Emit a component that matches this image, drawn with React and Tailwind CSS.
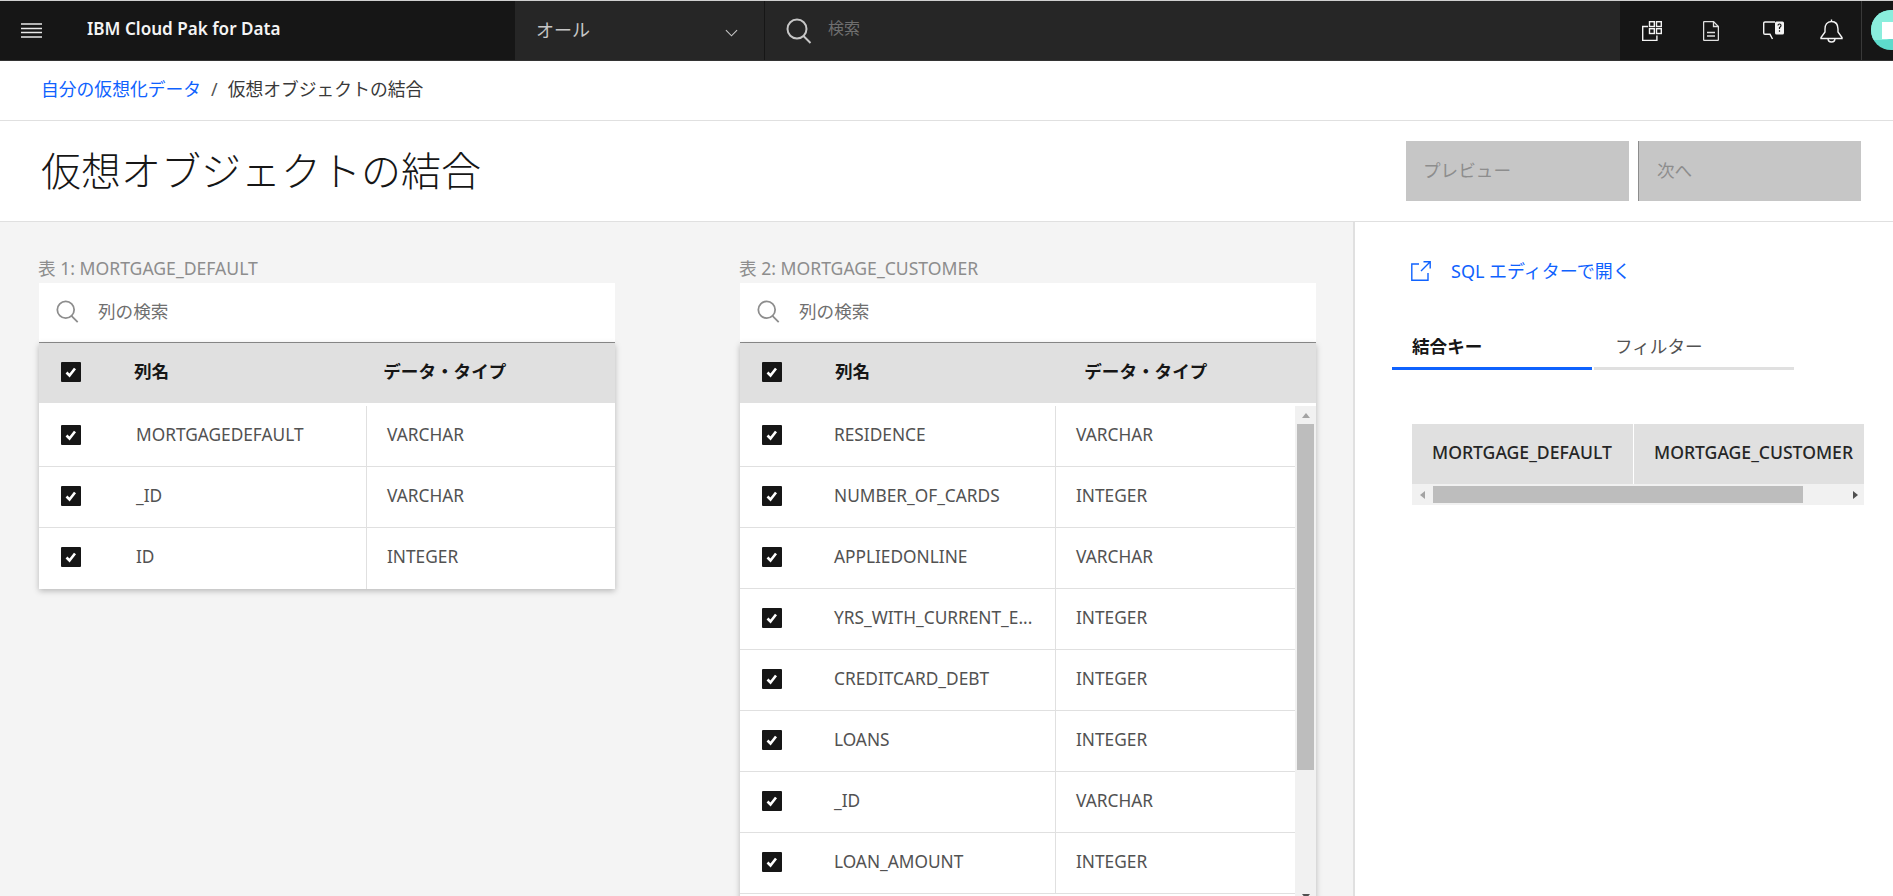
import React from 'react';

const FONT = '"Noto Sans", "Noto Sans CJK JP", sans-serif';

const table1 = [
  ['MORTGAGEDEFAULT', 'VARCHAR'],
  ['_ID', 'VARCHAR'],
  ['ID', 'INTEGER'],
];

const table2 = [
  ['RESIDENCE', 'VARCHAR'],
  ['NUMBER_OF_CARDS', 'INTEGER'],
  ['APPLIEDONLINE', 'VARCHAR'],
  ['YRS_WITH_CURRENT_E...', 'INTEGER'],
  ['CREDITCARD_DEBT', 'INTEGER'],
  ['LOANS', 'INTEGER'],
  ['_ID', 'VARCHAR'],
  ['LOAN_AMOUNT', 'INTEGER'],
];

const SearchIcon = ({ className }) => (
  <svg viewBox="0 0 26 26" fill="none" stroke="currentColor" strokeWidth="2" className={className}>
    <ellipse cx="11" cy="11" rx="9.5" ry="9.5" />
    <path d="M17.5 18l7 7" />
  </svg>
);

const Checkbox = () => (
  <div className="w-5 h-5 bg-[#161616] rounded-[1px] flex items-center justify-center shrink-0">
    <svg viewBox="0 0 20 20" className="w-5 h-5" fill="none" stroke="#fff" strokeWidth="2.6">
      <path d="M5.5 10.5l3 3 5.5-7" />
    </svg>
  </div>
);

const TableBlock = ({ label, rows, firstCol, textLeft, scroll }) => (
  <div className="w-[576px] shrink-0">
    <div className="h-[17px] flex items-center pt-[2px] text-[17.6px] text-[#8d8d8d] whitespace-nowrap -ml-px">{label}</div>
    <div className="mt-[7px] h-[60px] bg-white border-b border-[#8d8d8d] flex items-center pl-[17px] pb-[2px]">
      <SearchIcon className="w-[23px] h-[23px] text-[#8d8d8d]" />
      <span className="ml-[19px] text-[17.6px] text-[#6f6f6f]">列の検索</span>
    </div>
    <div className="shadow-[0_2px_6px_rgba(0,0,0,0.25)] bg-white">
      <div className="h-[60px] bg-[#e0e0e0] flex items-center pl-[22px] pb-[2px]">
        <Checkbox />
        <span className="ml-[53px] mb-[2px] text-[17.6px] font-bold text-[#161616]">列名</span>
        <span className="mb-[2px] text-[17.6px] font-bold text-[#161616] ml-[214px]">データ・タイプ</span>
      </div>
      <div className="pt-[3px] flex">
        <div className="flex-1 min-w-0">
          {rows.map(([name, type], i) => (
            <div key={i} className={`flex h-[61px] ${i < rows.length - 1 || scroll ? 'border-b border-[#e0e0e0]' : ''}`}>
              <div className={`${firstCol} flex items-center pl-[22px] pb-[3px] border-r border-[#e0e0e0]`}>
                <Checkbox />
                <span className={`${textLeft} text-[17.3px] text-[#525252] whitespace-nowrap`}>{name}</span>
              </div>
              <div className="flex-1 flex items-center pl-[20px] pb-[3px] text-[17.3px] text-[#525252]">{type}</div>
            </div>
          ))}
          {scroll && <div className="h-[61px]" />}
        </div>
        {scroll && (
          <div className="w-[21px] bg-[#f1f1f1] flex flex-col items-center shrink-0">
            <div className="h-[18px] flex items-center justify-center">
              <div className="w-0 h-0 border-x-[4px] border-x-transparent border-b-[5px] border-b-[#a3a3a3]" />
            </div>
            <div className="w-[17px] h-[346px] bg-[#bdbdbd]" />
            <div className="mt-[124px] w-0 h-0 border-x-[4px] border-x-transparent border-t-[5px] border-t-[#505050]" />
          </div>
        )}
      </div>
    </div>
  </div>
);

export default function App() {
  return (
    <div className="w-[1893px] h-[896px] overflow-hidden bg-white flex flex-col" style={{ fontFamily: FONT }}>
      <div className="h-px bg-[#d0d0d0]" />
      {/* top nav */}
      <header className="h-[60px] flex bg-[#161616] border-b border-[#333333] shrink-0">
        <div className="w-[515px] flex items-center pl-[21px]">
          <svg viewBox="0 0 21 15" className="w-[21px] h-[15px]" stroke="#e8e8e8" strokeWidth="1.5">
            <path d="M0 1h21M0 5.5h21M0 9.5h21M0 14h21" />
          </svg>
          <span className="ml-[45px] text-[17.1px] font-semibold text-[#f4f4f4] mb-[3px] whitespace-nowrap">IBM Cloud Pak for Data</span>
        </div>
        <div className="w-[250px] bg-[#262626] flex items-center justify-between pl-[21px] pr-[26px] border-r border-[#161616]">
          <span className="text-[18px] text-[#c6c6c6]">オール</span>
          <svg viewBox="0 0 14 8" className="w-[13px] h-[8px] mt-[4px]" fill="none" stroke="#c6c6c6" strokeWidth="1.2">
            <path d="M1 1l6 6 6-6" />
          </svg>
        </div>
        <div className="w-[855px] bg-[#262626] flex items-center pl-[21px]">
          <SearchIcon className="w-[26px] h-[26px] text-[#c6c6c6]" />
          <span className="ml-[16px] text-[16px] text-[#6f6f6f] mb-[6px]">検索</span>
        </div>
        <div className="flex-1 flex items-center relative overflow-hidden">
          <svg viewBox="0 0 20 20" className="w-5 h-5 ml-[22px]" fill="none" stroke="#f4f4f4" strokeWidth="1.4">
            <path d="M6 5.5H0.7v14h14.2v-5" />
            <rect x="7.5" y="0.7" width="4.8" height="4.8" />
            <rect x="14.5" y="0.7" width="4.8" height="4.8" />
            <rect x="7.5" y="7.7" width="4.8" height="4.8" />
            <rect x="14.5" y="7.7" width="4.8" height="4.8" />
          </svg>
          <svg viewBox="0 0 16 20" className="w-4 h-5 ml-[41px]" fill="none" stroke="#e0e0e0" strokeWidth="1.3">
            <path d="M0.6 1.5Q0.6 0.6 1.5 0.6H10.5L15.4 5.5V18.5Q15.4 19.4 14.5 19.4H1.5Q0.6 19.4 0.6 18.5Z" />
            <path d="M10.5 0.6V5.5H15.4M4 11.5h8M4 15h8" />
          </svg>
          <svg viewBox="0 0 21 21" className="w-[21px] h-[21px] ml-[44px]" fill="none">
            <path d="M12 2H2Q0.7 2 0.7 3.3V13Q0.7 14.3 2 14.3H7L9.5 19" stroke="#f4f4f4" strokeWidth="1.4" />
            <rect x="12" y="1.5" width="9" height="13" rx="1.5" fill="#f4f4f4" />
            <path d="M15 5.5Q15 4 16.5 4T18 5.5Q18 6.8 16.5 7.5V9M16.5 10.2v1.6" stroke="#161616" strokeWidth="1.2" />
          </svg>
          <svg viewBox="0 0 23 24" className="w-[23px] h-[24px] ml-[36px]" fill="none" stroke="#f4f4f4" strokeWidth="1.4">
            <path d="M11.5 2.5C7 2.5 5 6 5 10V13L1 18.5V19.5H22V18.5L18 13V10C18 6 16 2.5 11.5 2.5ZM11.5 2.5V0.5M8 19.5C8 22 10 23 11.5 23S15 22 15 19.5" />
          </svg>
          <div className="absolute left-[241px] top-0 h-full w-px bg-[#393939]" />
          <div className="absolute left-[251px] top-[9px] w-10 h-10 rounded-full overflow-hidden bg-[#5ddbcc]">
            <div className="absolute left-0 top-0 w-[32px] h-[30px] rounded-br-[20px] bg-[#8aeedd]" />
            <div className="absolute left-[11px] top-[12px] w-[30px] h-[17px] bg-white" />
          </div>
        </div>
      </header>

      {/* breadcrumb */}
      <div className="h-[60px] flex items-center pl-[41px] border-b border-[#e0e0e0] text-[17.8px] shrink-0 pb-[3px]">
        <span className="text-[#0f62fe]">自分の仮想化データ</span>
        <span className="mx-[10px] text-[#525252]">/</span>
        <span className="text-[#393939]">仮想オブジェクトの結合</span>
      </div>

      {/* title */}
      <div className="h-[101px] flex items-center justify-between pl-[41px] pr-[32px] border-b border-[#e0e0e0] shrink-0">
        <h1 className="text-[40px] font-light text-[#161616]">仮想オブジェクトの結合</h1>
        <div className="flex gap-[9px]">
          <div className="w-[223px] h-[60px] bg-[#c6c6c6] flex items-center pl-[17px] pb-[2px] text-[17.6px] text-[#8d8d8d]">プレビュー</div>
          <div className="w-[223px] h-[60px] bg-[#c6c6c6] border-l border-[#8d8d8d] flex items-center pl-[18px] pb-[2px] text-[17.6px] text-[#8d8d8d]">次へ</div>
        </div>
      </div>

      <div className="flex-1 flex min-h-0">
        {/* tables */}
        <main className="w-[1353px] bg-[#f4f4f4] flex gap-[125px] pl-[39px] pt-[37px] shrink-0">
          <TableBlock label="表 1: MORTGAGE_DEFAULT" rows={table1} firstCol="w-[328px]" textLeft="ml-[55px]" />
          <TableBlock label="表 2: MORTGAGE_CUSTOMER" rows={table2} firstCol="w-[316px]" textLeft="ml-[52px]" scroll />
        </main>

        {/* side panel */}
        <aside className="flex-1 border-l-2 border-[#e0e0e0] pl-[37px]">
          <div className="mt-[38px] flex items-center pl-[19px] h-[22px] text-[#0f62fe]">
            <svg viewBox="0 0 20 20" className="w-5 h-5" fill="none" stroke="#0f62fe" strokeWidth="1.4">
              <path d="M8 3H0.8V19.2H17V12M10 10L19 1M12.5 0.8H19.2V7.5" />
            </svg>
            <span className="ml-[20px] text-[18px]">SQL エディターで開く</span>
          </div>
          <div className="mt-[42px] flex gap-[2px]">
            <div className="w-[200px] h-[46px] border-b-[3px] border-[#0f62fe] flex items-center pl-[20px] pt-[2px] text-[17.6px] font-bold text-[#161616]">結合キー</div>
            <div className="w-[200px] h-[46px] border-b-[3px] border-[#e0e0e0] flex items-center pl-[21px] pt-[2px] text-[17.6px] text-[#525252]">フィルター</div>
          </div>
          <div className="mt-[54px] ml-[20px] w-[452px]">
            <div className="flex h-[60px] bg-[#e0e0e0] text-[17.6px] font-medium text-[#262626] overflow-hidden">
              <div className="w-[222px] flex items-center pl-[20px] pb-[3px] border-r border-white shrink-0">MORTGAGE_DEFAULT</div>
              <div className="flex items-center pl-[20px] pb-[3px] whitespace-nowrap">MORTGAGE_CUSTOMER</div>
            </div>
            <div className="h-[21px] bg-[#f1f1f1] flex items-center">
              <div className="w-[21px] flex justify-center">
                <div className="w-0 h-0 border-y-[4px] border-y-transparent border-r-[5px] border-r-[#a3a3a3]" />
              </div>
              <div className="w-[370px] h-[17px] bg-[#bdbdbd]" />
              <div className="flex-1 flex justify-end pr-[6px]">
                <div className="w-0 h-0 border-y-[4px] border-y-transparent border-l-[5px] border-l-[#505050]" />
              </div>
            </div>
          </div>
        </aside>
      </div>
    </div>
  );
}
